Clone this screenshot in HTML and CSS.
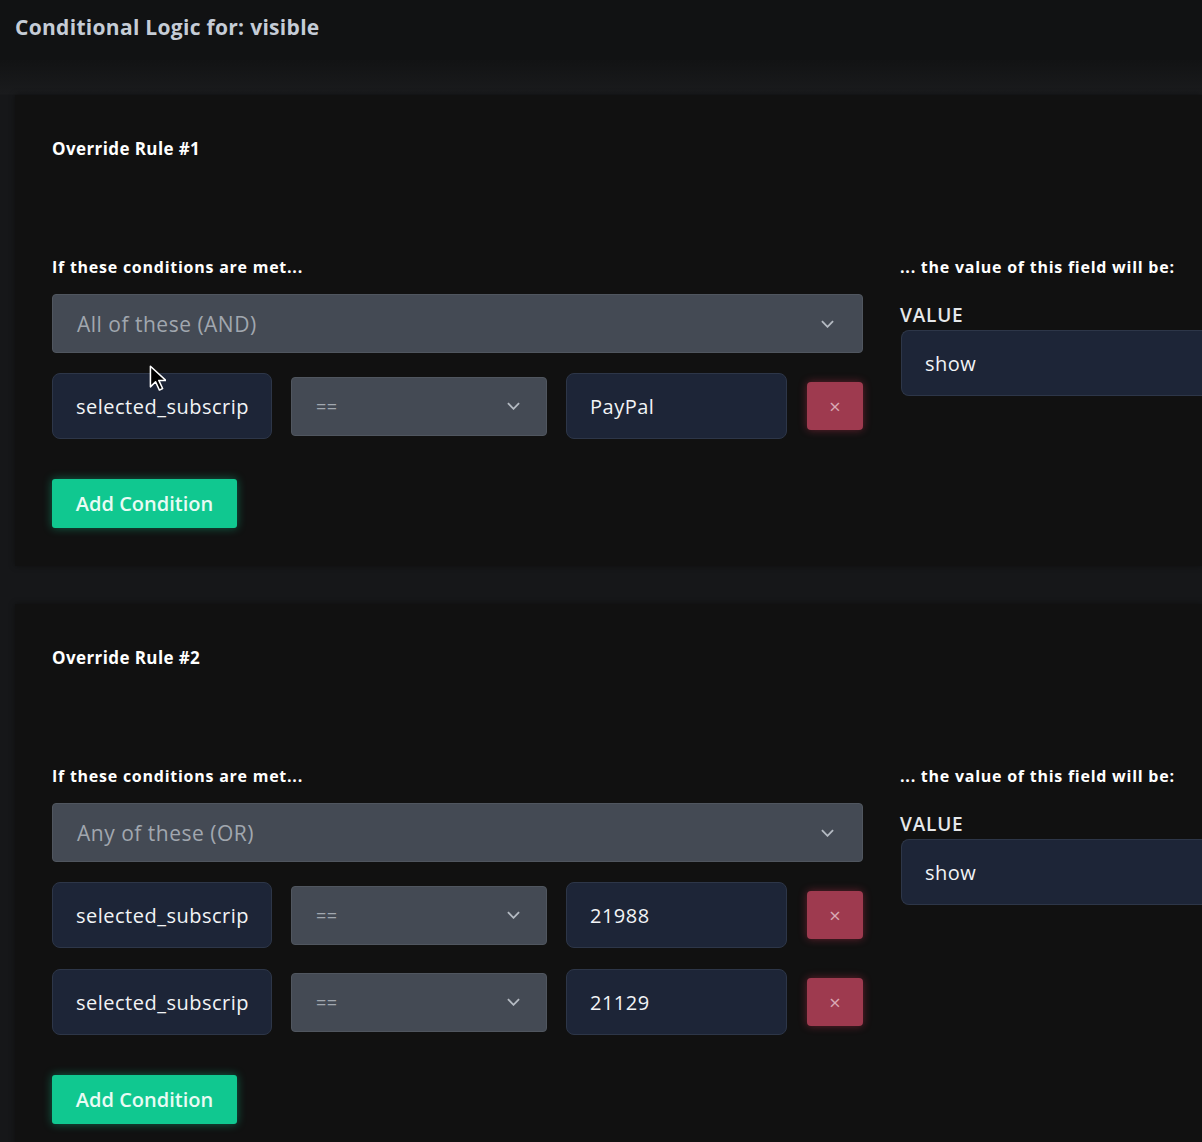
FILE: index.html
```html
<!DOCTYPE html>
<html lang="en">
<head>
    <meta charset="UTF-8">
    <meta name="viewport" content="width=device-width, initial-scale=1.0">
    <title>Conditional Logic</title>
    <link rel="stylesheet" href="styles.css">
</head>
<body>

    <h1 class="page-title">Conditional Logic for: visible</h1>

    <div class="rules">

        <section class="rule">
            <h2 class="rule-title">Override Rule #1</h2>
            <div class="rule-body">
                <div class="conditions">
                    <div class="col-label">If these conditions are met...</div>
                    <div class="select wide">
                        <span>All of these (AND)</span>
                        <svg class="chev" viewBox="0 0 14 8"><path d="M1 1l6 6 6-6"/></svg>
                    </div>
                    <div class="cond-row">
                        <div class="input field">selected_subscrip</div>
                        <div class="select op">
                            <span>==</span>
                            <svg class="chev" viewBox="0 0 14 8"><path d="M1 1l6 6 6-6"/></svg>
                        </div>
                        <div class="input val">PayPal</div>
                        <button class="remove">&times;</button>
                        <!-- mouse pointer hovering the row -->
                        <svg class="pointer" viewBox="0 0 13 21"><path d="M1 1v16l4-4 3 6.5 2.5-1.2-3-6.3h5.5z"/></svg>
                    </div>
                    <button class="add">Add Condition</button>
                </div>
                <div class="result">
                    <div class="col-label">... the value of this field will be:</div>
                    <div class="value-label">VALUE</div>
                    <div class="input value">show</div>
                </div>
            </div>
        </section>

        <section class="rule">
            <h2 class="rule-title">Override Rule #2</h2>
            <div class="rule-body">
                <div class="conditions">
                    <div class="col-label">If these conditions are met...</div>
                    <div class="select wide">
                        <span>Any of these (OR)</span>
                        <svg class="chev" viewBox="0 0 14 8"><path d="M1 1l6 6 6-6"/></svg>
                    </div>
                    <div class="cond-row">
                        <div class="input field">selected_subscrip</div>
                        <div class="select op">
                            <span>==</span>
                            <svg class="chev" viewBox="0 0 14 8"><path d="M1 1l6 6 6-6"/></svg>
                        </div>
                        <div class="input val">21988</div>
                        <button class="remove">&times;</button>
                    </div>
                    <div class="cond-row">
                        <div class="input field">selected_subscrip</div>
                        <div class="select op">
                            <span>==</span>
                            <svg class="chev" viewBox="0 0 14 8"><path d="M1 1l6 6 6-6"/></svg>
                        </div>
                        <div class="input val">21129</div>
                        <button class="remove">&times;</button>
                    </div>
                    <button class="add">Add Condition</button>
                </div>
                <div class="result">
                    <div class="col-label">... the value of this field will be:</div>
                    <div class="value-label">VALUE</div>
                    <div class="input value">show</div>
                </div>
            </div>
        </section>

    </div>

</body>
</html>
```

FILE: styles.css
```css
body {
    margin: 0;
    background: #111213;
    font-family: "Open Sans", Lato, sans-serif;
    color: #fff;
    overflow: hidden;
}
.page-title {
    margin: 0;
    padding: 13px 15px 0;
    height: 48px;
    box-sizing: border-box;
    font-size: 21px;
    line-height: 28px;
    font-weight: 700;
    letter-spacing: 0.3px;
    color: #c5ccd6;
}
.rules {
    margin-top: 12px;
    padding: 35px 0 0 15px;
    background: linear-gradient(#121314 0, #1a1b1d 34px, #161719 35px);
    display: flex;
    flex-direction: column;
    gap: 38px;
}
.rule {
    background: #111111;
    padding: 43px 0 38px 37px;
    box-shadow: 0 0 6px rgba(0, 0, 0, 0.4);
}
.rule-title {
    margin: 0;
    font-size: 17px;
    font-weight: 700;
    line-height: 22px;
    letter-spacing: 0.4px;
}
.rule-body {
    margin-top: 97px;
    display: flex;
    gap: 37px;
}
.conditions {
    width: 811px;
    flex-shrink: 0;
    display: flex;
    flex-direction: column;
}
.col-label {
    font-size: 16px;
    font-weight: 700;
    line-height: 20px;
    margin-bottom: 17px;
    letter-spacing: 0.75px;
    white-space: nowrap;
}
.select {
    box-sizing: border-box;
    background: #444a54;
    border: 1px solid #50565f;
    border-radius: 4px;
    display: flex;
    align-items: center;
    justify-content: space-between;
    color: #a1a7af;
    font-size: 21px;
    letter-spacing: 0.5px;
}
.select.wide {
    height: 59px;
    padding: 0 28px 0 24px;
    margin-bottom: 20px;
}
.chev {
    width: 13px;
    height: 8px;
    fill: none;
    stroke: #b4bac2;
    stroke-width: 2;
}
.cond-row {
    position: relative;
    display: flex;
    align-items: center;
    gap: 19px;
    height: 66px;
    margin-bottom: 21px;
}
.input {
    box-sizing: border-box;
    height: 66px;
    background: #1d2537;
    border: 1px solid #2d3648;
    border-radius: 8px;
    display: flex;
    align-items: center;
    padding: 0 23px;
    font-size: 20px;
    letter-spacing: 0.5px;
    color: #f2f4f6;
    white-space: nowrap;
    overflow: hidden;
}
.input.field {
    width: 220px;
}
.select.op {
    width: 256px;
    height: 59px;
    padding: 0 26px 0 24px;
    font-size: 18px;
}
.input.val {
    width: 221px;
}
.remove {
    width: 56px;
    height: 48px;
    margin-left: 1px;
    border: none;
    border-radius: 4px;
    background: #9e3a4f;
    color: #d9a9b4;
    font-size: 20px;
    font-family: inherit;
    box-shadow: 0 0 8px rgba(200, 50, 80, 0.45);
}
.pointer {
    position: absolute;
    left: 97px;
    top: -8px;
    width: 17px;
    height: 27px;
    fill: #000;
    stroke: #fff;
    stroke-width: 1.2;
    stroke-linejoin: round;
}
.add {
    align-self: flex-start;
    margin-top: 19px;
    width: 185px;
    height: 49px;
    border: none;
    border-radius: 3px;
    background: #10c890;
    color: #e9fbf4;
    font-family: inherit;
    font-size: 20px;
    font-weight: 600;
    box-shadow: 0 0 10px rgba(16, 200, 144, 0.45);
}
.result {
    flex: 1;
    min-width: 340px;
}
.value-label {
    font-size: 19px;
    font-weight: 600;
    letter-spacing: 0.8px;
    color: #e6e8ea;
    line-height: 20px;
    margin-top: 28px;
    margin-bottom: 5px;
}
.input.value {
    border-radius: 8px 0 0 8px;
    border-right: none;
    margin-left: 1px;
}
```
